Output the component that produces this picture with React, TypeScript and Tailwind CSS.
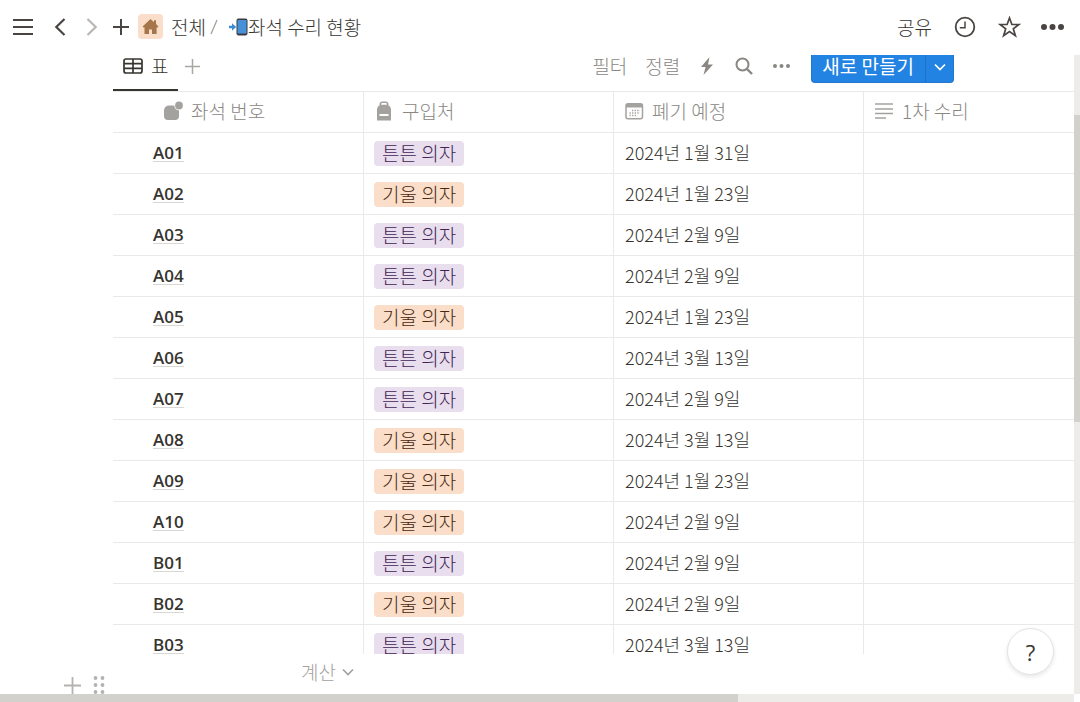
import { ReactNode } from "react";

type Vendor = "튼튼 의자" | "기울 의자";

interface Seat {
  id: string;
  vendor: Vendor;
  disposal: string;
}

const seats: Seat[] = [
  { id: "A01", vendor: "튼튼 의자", disposal: "2024년 1월 31일" },
  { id: "A02", vendor: "기울 의자", disposal: "2024년 1월 23일" },
  { id: "A03", vendor: "튼튼 의자", disposal: "2024년 2월 9일" },
  { id: "A04", vendor: "튼튼 의자", disposal: "2024년 2월 9일" },
  { id: "A05", vendor: "기울 의자", disposal: "2024년 1월 23일" },
  { id: "A06", vendor: "튼튼 의자", disposal: "2024년 3월 13일" },
  { id: "A07", vendor: "튼튼 의자", disposal: "2024년 2월 9일" },
  { id: "A08", vendor: "기울 의자", disposal: "2024년 3월 13일" },
  { id: "A09", vendor: "기울 의자", disposal: "2024년 1월 23일" },
  { id: "A10", vendor: "기울 의자", disposal: "2024년 2월 9일" },
  { id: "B01", vendor: "튼튼 의자", disposal: "2024년 2월 9일" },
  { id: "B02", vendor: "기울 의자", disposal: "2024년 2월 9일" },
  { id: "B03", vendor: "튼튼 의자", disposal: "2024년 3월 13일" },
];

const vendorStyles: Record<Vendor, string> = {
  "튼튼 의자": "bg-[#e8deee] text-[#412454]",
  "기울 의자": "bg-[#fadec9] text-[#49290e]",
};

const PlusIcon = ({ size, stroke }: { size: number; stroke: number }) => (
  <svg width={size} height={size} viewBox="0 0 16 16" fill="none" stroke="currentColor" strokeWidth={stroke}>
    <path d="M8 0v16M0 8h16" />
  </svg>
);

const DotsIcon = ({ width, r }: { width: number; r: number }) => (
  <svg width={width} height="8" viewBox={`0 0 ${width} 8`} fill="currentColor">
    <circle cx={r} cy="4" r={r} />
    <circle cx={width / 2} cy="4" r={r} />
    <circle cx={width - r} cy="4" r={r} />
  </svg>
);

const ChevronDown = () => (
  <svg width="12" height="8" viewBox="0 0 12 8" fill="none" stroke="currentColor" strokeWidth="1.7">
    <path d="M1 1.5l5 5 5-5" />
  </svg>
);

const TopBar = () => (
  <header className="flex h-[55px] shrink-0 items-center justify-between pr-4 pb-0.5 pl-[13px] text-[#37352f]">
    <div className="flex items-center">
      <button aria-label="메뉴" className="mr-[21px] text-[#4a4542]">
        <svg width="20" height="18" viewBox="0 0 20 18" stroke="currentColor" strokeWidth="2">
          <path d="M0 2h20M0 9h20M0 16h20" />
        </svg>
      </button>
      <button aria-label="뒤로" className="mr-5 text-[#4a4542]">
        <svg width="12" height="18" viewBox="0 0 12 18" fill="none" stroke="currentColor" strokeWidth="2.2">
          <path d="M10.5 1L2.3 9l8.2 8" />
        </svg>
      </button>
      <button aria-label="앞으로" className="mr-[15px] text-[#b9b6b4]">
        <svg width="12" height="18" viewBox="0 0 12 18" fill="none" stroke="currentColor" strokeWidth="2.2">
          <path d="M1.5 1l8.2 8-8.2 8" />
        </svg>
      </button>
      <button aria-label="새 페이지" className="mr-[9px] text-[#4a4542]">
        <PlusIcon size={16} stroke={2} />
      </button>
      <a href="#all" className="flex items-center gap-2">
        <span className="flex size-[25px] items-center justify-center rounded-sm bg-[#fadec9] text-[#a5754b]">
          <svg width="17" height="17" viewBox="0 0 17 17" fill="currentColor">
            <path d="M8.500 1L12 4.200V2.300h2v3.800l2.500 2.300-.9 1.100h-1V16H10v-4.500H7V16H2.500V9.500h-1l-.9-1.100z" />
          </svg>
        </span>
        전체
      </a>
      <span className="ml-1 text-[#a8a19a]">
        <svg width="8" height="16" viewBox="0 0 8 16" fill="none" stroke="currentColor" strokeWidth="1.3">
          <path d="M7 1L1 15" />
        </svg>
      </span>
      <a href="#seats" className="ml-[11px] flex items-center">
        <svg width="19" height="18" viewBox="0 0 19 18">
          <path d="M0 7.700h3V5.200l4.200 3.800L3 12.800v-2.500H0z" fill="#3f8ad6" />
          <rect x="7.500" y="0.500" width="11" height="17" rx="2" fill="#3b3b3f" />
          <rect x="8.500" y="2" width="9" height="13.500" fill="#4791d8" />
        </svg>
        좌석 수리 현황
      </a>
    </div>
    <div className="flex items-center">
      <button className="mr-[22px]">공유</button>
      <button aria-label="업데이트 기록" className="mr-[22px] text-[#4a4542]">
        <svg width="22" height="22" viewBox="0 0 22 22" fill="none" stroke="currentColor" strokeWidth="1.8">
          <circle cx="11" cy="11" r="9.3" />
          <path d="M11 5.500v6.200H5.800" strokeWidth="1.5" />
        </svg>
      </button>
      <button aria-label="즐겨찾기" className="mr-5 text-[#4a4542]">
        <svg width="23" height="22" viewBox="0 0 23 22" fill="none" stroke="currentColor" strokeWidth="1.7">
          <path d="M11.500 2l2.400 6.500h7l-5.600 4.200 2.100 7-5.900-4.100-5.900 4.100 2.100-7L2.100 8.500h7z" />
        </svg>
      </button>
      <button aria-label="더 보기" className="text-[#4a4542]">
        <DotsIcon width={23} r={3} />
      </button>
    </div>
  </header>
);

const Toolbar = () => (
  <div className="-mt-[14px] flex h-[50px] shrink-0 items-center justify-between pr-[120px] text-[#8a8783]">
    <div className="flex h-full items-center">
      <button className="flex h-full items-center gap-2 border-b-2 border-[#37352f] px-[10px] pt-0.5 text-[#37352f]">
        <svg width="20" height="16" viewBox="0 0 20 16" fill="none" stroke="currentColor" strokeWidth="1.7">
          <rect x="1" y="1" width="18" height="14" rx="2" />
          <path d="M1 5.700h18M1 10.300h18M10 1v14" />
        </svg>
        표
      </button>
      <button aria-label="보기 추가" className="ml-[7px] text-[#a9a7a4]">
        <PlusIcon size={15} stroke={1.6} />
      </button>
    </div>
    <div className="flex items-center">
      <button className="mr-[18px]">필터</button>
      <button className="mr-5">정렬</button>
      <button aria-label="자동화" className="mr-[21px]">
        <svg width="14" height="18" viewBox="0 0 14 18" fill="currentColor">
          <path d="M9.500 0L1 10h4.600L3.500 18 13 7.500H8z" />
        </svg>
      </button>
      <button aria-label="검색" className="mr-5">
        <svg width="18" height="18" viewBox="0 0 18 18" fill="none" stroke="currentColor" strokeWidth="2">
          <circle cx="7.500" cy="7.500" r="6" />
          <path d="M12 12l5 5" strokeWidth="2.400" />
        </svg>
      </button>
      <button aria-label="보기 옵션" className="mr-[21px]">
        <DotsIcon width={17} r={2} />
      </button>
      <div className="flex h-[33px] overflow-hidden rounded-[4px] bg-[#2383e2] font-normal text-white shadow-[inset_0_0_0_1px_rgba(15,15,15,0.1)]">
        <button className="pr-[11px] pl-[11px]">새로 만들기</button>
        <button aria-label="템플릿 선택" className="flex items-center border-l border-[#1f73c7] px-2 pt-0.5">
          <ChevronDown />
        </button>
      </div>
    </div>
  </div>
);

interface HeadCellProps {
  icon: ReactNode;
  label: string;
  className: string;
}

const HeadCell = ({ icon, label, className }: HeadCellProps) => (
  <th scope="col" className={`h-[41px] border-b border-[#e9e9e7] p-0 pb-0.5 font-light text-[#8a8783] ${className}`}>
    <div className="flex items-center gap-2">
      {icon}
      {label}
    </div>
  </th>
);

const SeatTable = () => (
  <table className="w-full table-fixed border-separate border-spacing-0 border-t border-[#e9e9e7] text-left">
    <thead>
      <tr>
        <HeadCell
          label="좌석 번호"
          className="w-[251px] border-r pl-[51px]"
          icon={
            <svg width="19" height="20" viewBox="0 0 19 20" fill="#a4a29f">
              <path d="M5 4.500h5.200a5 5 0 0 0 4.800 5V15a4 4 0 0 1-4 4H4a4 4 0 0 1-4-4V9.500a5 5 0 0 1 5-5z" />
              <circle cx="15" cy="4.500" r="3.900" />
            </svg>
          }
        />
        <HeadCell
          label="구입처"
          className="w-[250px] border-r pl-3"
          icon={
            <svg width="18" height="20" viewBox="0 0 18 20" fill="#a4a29f">
              <path
                fillRule="evenodd"
                d="M3.500 4.500V3.500a3 3 0 0 1 3-3h3a3 3 0 0 1 3 3v1C14.500 5.500 15 7 15 9v10.500H1V9c0-2 .5-3.500 2.500-4.500zM5.200 3.700h5.600V3a1 1 0 0 0-1-1H6.200a1 1 0 0 0-1 1zM3.500 13v2h9v-2z"
              />
            </svg>
          }
        />
        <HeadCell
          label="폐기 예정"
          className="w-[250px] border-r pl-[11px]"
          icon={
            <svg width="19" height="18" viewBox="0 0 19 18" fill="none">
              <rect x="1" y="1.800" width="16.500" height="15" rx="2" stroke="#a4a29f" strokeWidth="1.500" />
              <path d="M1 2h16.500v3.500H1z" fill="#a4a29f" />
              <path
                d="M7 8.500h8M4.500 11h10.500M4.500 13.500h8"
                stroke="#a4a29f"
                strokeWidth="1.300"
                strokeDasharray="1.300 1.300"
              />
            </svg>
          }
        />
        <HeadCell
          label="1차 수리"
          className="pl-[11px]"
          icon={
            <svg width="19" height="18" viewBox="0 0 19 18" stroke="#a4a29f" strokeWidth="1.500">
              <path d="M0 2h18M0 7h18M0 11.500h18M0 16h11" />
            </svg>
          }
        />
      </tr>
    </thead>
    <tbody>
      {seats.map((seat) => (
        <tr key={seat.id}>
          <td className="h-[41px] border-r border-b border-[#e9e9e7] p-0 pl-10">
            <a
              href={`#${seat.id}`}
              className="flex h-[18px] w-fit items-center border-b border-[#d8d7d4] font-['Open_Sans','Noto_Sans_CJK_KR',sans-serif] text-[17px]/[18px] font-semibold"
            >
              {seat.id}
            </a>
          </td>
          <td className="border-r border-b border-[#e9e9e7] p-0 pl-[10px]">
            <span className={`flex h-[25px] w-fit items-center rounded-[4px] px-2 ${vendorStyles[seat.vendor]}`}>
              {seat.vendor}
            </span>
          </td>
          <td className="border-r border-b border-[#e9e9e7] p-0 pb-0.5 pl-[11px] text-[18px]">{seat.disposal}</td>
          <td className="border-b border-[#e9e9e7] p-0"></td>
        </tr>
      ))}
    </tbody>
  </table>
);

const TableFooter = () => (
  <div className="flex h-10 shrink-0 overflow-hidden">
    <div className="flex h-10 w-[113px] shrink-0 items-end gap-3 pl-16 text-[#b4b2af]">
      <button aria-label="블록 추가">
        <PlusIcon size={17} stroke={1.700} />
      </button>
      <button aria-label="블록 이동">
        <svg width="12" height="18" viewBox="0 0 12 18" fill="currentColor">
          <circle cx="2.500" cy="2" r="1.900" />
          <circle cx="9.500" cy="2" r="1.900" />
          <circle cx="2.500" cy="9" r="1.900" />
          <circle cx="9.500" cy="9" r="1.900" />
          <circle cx="2.500" cy="16" r="1.900" />
          <circle cx="9.500" cy="16" r="1.900" />
        </svg>
      </button>
    </div>
    <div className="flex h-9 w-[250px] items-center justify-end pr-[9px] text-[#a5a19d]">
      <button className="flex items-center gap-1.5">
        계산
        <ChevronDown />
      </button>
    </div>
  </div>
);

const App = () => {
  return (
    <div className="flex h-screen flex-col overflow-hidden bg-white font-['Noto_Sans_CJK_KR',sans-serif] text-[19px]/[20px] font-light text-[#37352f]">
      <TopBar />
      <div className="flex min-h-0 flex-1">
        <main className="relative flex min-w-0 flex-1 flex-col overflow-hidden">
          <div className="flex min-h-0 flex-1 flex-col overflow-hidden pl-[113px]">
            <Toolbar />
            <SeatTable />
          </div>
          <TableFooter />
          <button
            aria-label="도움말"
            className="absolute right-5 bottom-[19px] size-[47px] rounded-full border border-[#e4e3e1] bg-white font-['Open_Sans',sans-serif] text-[22px] font-normal shadow-[0_2px_4px_rgba(15,15,15,0.1)]"
          >
            ?
          </button>
        </main>
        <div className="w-1.5 shrink-0 bg-[#edece9] pt-[60px]">
          <div className="h-[53%] bg-[#d3d1cb]"></div>
        </div>
      </div>
      <div className="mr-1.5 h-2 shrink-0 bg-[#edece9]">
        <div className="h-full w-11/16 bg-[#d3d1cb]"></div>
      </div>
    </div>
  );
};

export default App;
